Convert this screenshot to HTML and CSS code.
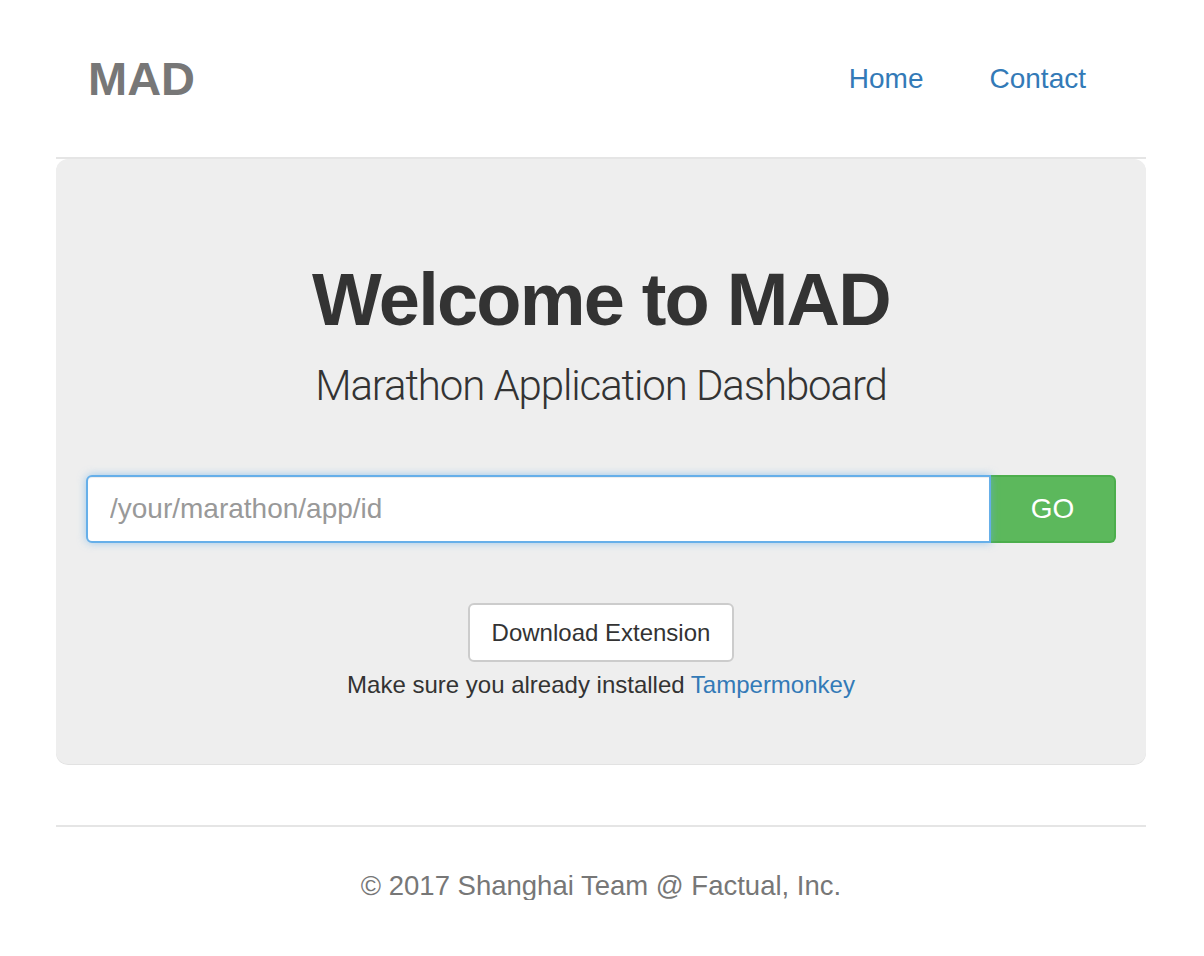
FILE: index.html
```html
<!DOCTYPE html>
<html lang="en">
<head>
<meta charset="utf-8">
<title>MAD</title>
<link rel="stylesheet" href="styles.css">
</head>
<body>
<div class="container">
  <header class="header">
    <div class="brand">MAD</div>
    <nav class="nav">
      <a href="#" class="nav-link">Home</a>
      <a href="#" class="nav-link">Contact</a>
    </nav>
  </header>

  <main class="jumbotron">
    <h1 class="title">Welcome to MAD</h1>
    <h2 class="subtitle">Marathon Application Dashboard</h2>
    <form class="input-group" onsubmit="return false">
      <input class="app-input" type="text" placeholder="/your/marathon/app/id">
      <button class="go-btn" type="submit">GO</button>
    </form>
    <div class="download">
      <button class="download-btn" type="button">Download Extension</button>
    </div>
    <p class="note">Make sure you already installed <a href="#" class="link">Tampermonkey</a></p>
  </main>

  <footer class="footer">
    <p class="copyright">© 2017 Shanghai Team @ Factual, Inc.</p>
  </footer>
</div>
</body>
</html>
```

FILE: styles.css
```css
* { box-sizing: border-box; }

body {
  margin: 0;
  background: #fff;
  font-family: "Liberation Sans", Arial, Helvetica, sans-serif;
  color: #333;
}

.container {
  width: 1090px;
  margin: 0 0 0 56px;
}

.header {
  height: 159px;
  display: flex;
  align-items: center;
  justify-content: space-between;
  padding: 0 60px 0 32px;
  border-bottom: 2px solid #e5e5e5;
}

.brand {
  font-size: 47px;
  line-height: 1;
  font-weight: bold;
  color: #777;
}

.nav {
  display: flex;
  gap: 66px;
}

.nav-link {
  font-size: 28px;
  line-height: 1;
  color: #337ab7;
  text-decoration: none;
}

.jumbotron {
  background: #eeeeee;
  border-radius: 12px;
  box-shadow: 0 1px 0 #e2e2e2;
  padding: 104px 30px 67px;
  text-align: center;
}

.title {
  margin: 0;
  font-size: 74px;
  line-height: 1;
  font-weight: bold;
  letter-spacing: -1.8px;
  color: #333;
}

.subtitle {
  margin: 28px 0 0;
  font-family: Roboto, "Liberation Sans", sans-serif;
  font-weight: 300;
  font-size: 42px;
  line-height: 1;
  letter-spacing: -1.1px;
  color: #333;
}

.input-group {
  margin: 68px 0 0;
  display: flex;
  height: 68px;
}

.app-input {
  flex: 1;
  min-width: 0;
  height: 68px;
  margin: 0;
  padding: 0 22px;
  border: 2px solid #66afe9;
  border-radius: 6px 0 0 6px;
  background: #fff;
  font-family: "Liberation Sans", Arial, sans-serif;
  font-size: 28px;
  color: #555;
  outline: none;
  box-shadow: inset 0 1px 1px rgba(0,0,0,.075), 0 0 8px rgba(102,175,233,.6);
  position: relative;
  z-index: 1;
}

.app-input::placeholder { color: #999; }

.go-btn {
  width: 125px;
  height: 68px;
  margin: 0;
  border: 2px solid #4cae4c;
  border-left: 0;
  border-radius: 0 6px 6px 0;
  background: #5cb85c;
  color: #fff;
  font-family: "Liberation Sans", Arial, sans-serif;
  font-size: 28px;
  padding: 0;
}

.download {
  margin-top: 60px;
}

.download-btn {
  height: 59px;
  padding: 0 22px;
  border: 2px solid #ccc;
  border-radius: 6px;
  background: #fff;
  color: #333;
  font-family: "Liberation Sans", Arial, sans-serif;
  font-size: 24px;
  line-height: 1;
}

.note {
  margin: 11px 0 0;
  font-size: 24px;
  line-height: 1;
  color: #333;
}

.link {
  color: #337ab7;
  text-decoration: none;
}

.footer {
  margin-top: 61px;
  border-top: 2px solid #e5e5e5;
  padding-top: 45px;
  text-align: center;
}

.copyright {
  margin: 0;
  font-size: 27.5px;
  line-height: 1;
  color: #777;
}
```
